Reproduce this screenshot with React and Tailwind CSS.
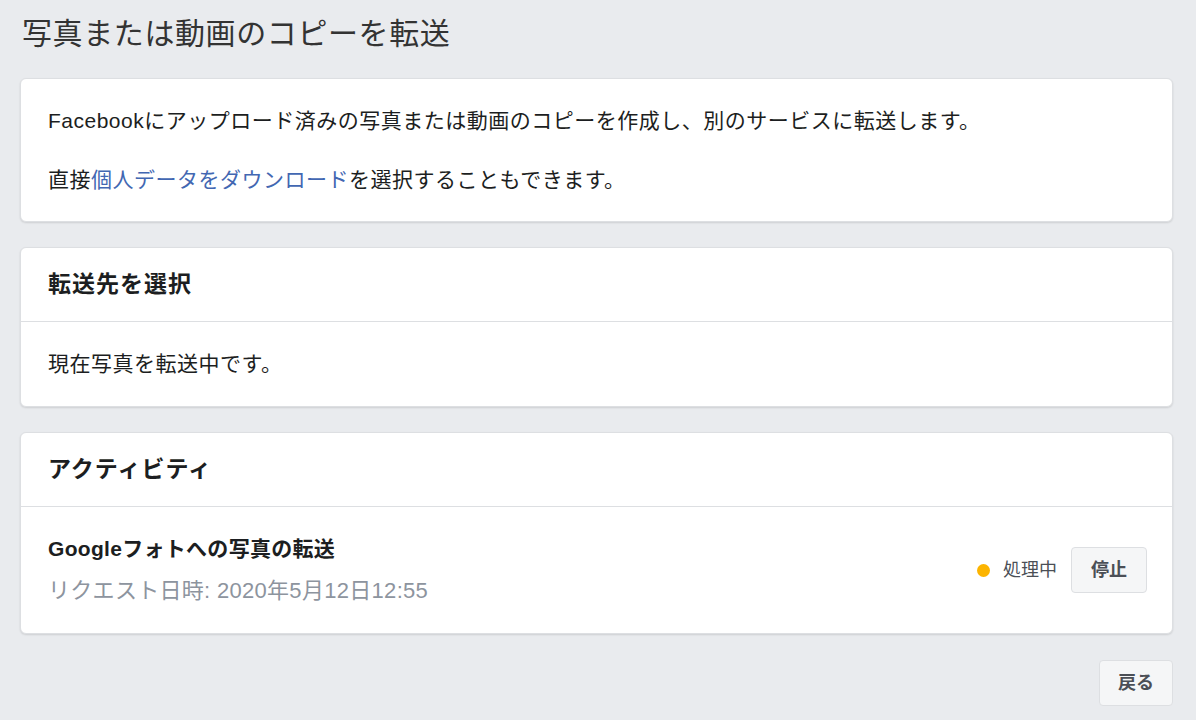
import React from 'react';

const font = {
  fontFamily: '"Liberation Sans", "Noto Sans CJK JP", sans-serif',
};

function Card({ title, children, className = '' }) {
  return (
    <div
      className={`rounded-md border border-[#dddfe2] bg-white shadow-[0_1px_2px_rgba(0,0,0,0.12)] ${className}`}
    >
      {title && (
        <div className="flex h-[74px] items-center border-b border-[#dddfe2] px-[27px]">
          <h2 className="text-[23px] font-bold tracking-[1px] text-[#1c1e21]">{title}</h2>
        </div>
      )}
      {children}
    </div>
  );
}

export default function App() {
  return (
    <div
      className="min-h-screen w-[1196px] bg-[#e9ebee] px-[20px] pt-[15px] pb-[14px]"
      style={font}
    >
      <h1 className="ml-[2px] text-[30px] leading-[38px] tracking-[0.6px] text-[#333]">
        写真または動画のコピーを転送
      </h1>

      <div className="mt-[25px] flex w-[1153px] flex-col gap-[25px]">
        <Card>
          <div className="flex h-[142px] flex-col justify-center gap-[29px] px-[27px] text-[21px] leading-[30px] tracking-[0.5px] text-[#1c1e21]">
            <p>
              Facebookにアップロード済みの写真または動画のコピーを作成し、別のサービスに転送します。
            </p>
            <p>
              直接
              <a href="#" className="text-[#4267b2]">
                個人データをダウンロード
              </a>
              を選択することもできます。
            </p>
          </div>
        </Card>

        <Card title="転送先を選択">
          <div className="flex h-[84px] items-center px-[27px] text-[21px] tracking-[0.5px] text-[#1c1e21]">
            現在写真を転送中です。
          </div>
        </Card>

        <Card title="アクティビティ">
          <div className="flex h-[126px] items-center justify-between pl-[27px] pr-[25px]">
            <div className="flex flex-col gap-[12px]">
              <div className="text-[21px] font-bold leading-[30px] tracking-[0.3px] text-[#1c1e21]">
                Googleフォトへの写真の転送
              </div>
              <div className="text-[22px] leading-[30px] tracking-[0.3px] text-[#8d949e]">
                リクエスト日時: 2020年5月12日12:55
              </div>
            </div>
            <div className="flex items-center">
              <span className="h-[13px] w-[13px] rounded-full bg-[#fcb400]" />
              <span className="ml-[13px] text-[18px] text-[#4b4f56]">処理中</span>
              <button className="ml-[14px] h-[46px] w-[76px] rounded-[4px] border border-[#dddfe2] bg-[#f5f6f7] text-[18px] font-bold text-[#4b4f56]">
                停止
              </button>
            </div>
          </div>
        </Card>
      </div>

      <div className="mt-[26px] flex w-[1153px] justify-end">
        <button className="h-[46px] w-[74px] rounded-[4px] border border-[#dddfe2] bg-[#f5f6f7] text-[18px] font-bold text-[#4b4f56]">
          戻る
        </button>
      </div>
    </div>
  );
}
